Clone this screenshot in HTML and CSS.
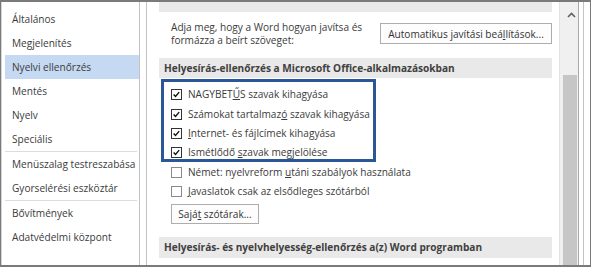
FILE: index.html
```html
<!DOCTYPE html>
<html lang="hu">
<head>
    <meta charset="UTF-8">
    <title>Word beállításai - Nyelvi ellenőrzés</title>
    <link rel="stylesheet" href="styles.css">
</head>
<body>
    <div class="dialog">
        <nav class="nav">
            <div class="nav-item">Általános</div>
            <div class="nav-item">Megjelenítés</div>
            <div class="nav-item active">Nyelvi ellenőrzés</div>
            <div class="nav-item">Mentés</div>
            <div class="nav-item">Nyelv</div>
            <div class="nav-item">Speciális</div>
            <div class="nav-sep"></div>
            <div class="nav-item">Menüszalag testreszabása</div>
            <div class="nav-item">Gyorselérési eszköztár</div>
            <div class="nav-sep"></div>
            <div class="nav-item">Bővítmények</div>
            <div class="nav-item">Adatvédelmi központ</div>
        </nav>
        <div class="pane">
            <div class="content">
                <div class="section-title cut"></div>
                <div class="autocorrect">
                    <p>Adja meg, hogy a Word hogyan javítsa és<br>formázza a beírt szöveget:</p>
                    <button class="btn btn-wide">Automatikus javítási beá<u>l</u>lítások...</button>
                </div>
                <div class="section-title">Helyesírás-ellenőrzés a Microsoft Office-alkalmazásokban</div>
                <div class="options">
                    <div class="marked">
                        <div class="row">
                            <span class="box checked"><svg viewBox="0 0 11 11"><path d="M2 5.4 L4.3 7.8 L8.8 2.6"/></svg></span>
                            <span>NAGYBET<u>Ű</u>S szavak kihagyása</span>
                        </div>
                        <div class="row">
                            <span class="box checked"><svg viewBox="0 0 11 11"><path d="M2 5.4 L4.3 7.8 L8.8 2.6"/></svg></span>
                            <span>Számokat tartalmaz<u>ó</u> szavak kihagyása</span>
                        </div>
                        <div class="row">
                            <span class="box checked"><svg viewBox="0 0 11 11"><path d="M2 5.4 L4.3 7.8 L8.8 2.6"/></svg></span>
                            <span><u>I</u>nternet- és fájlcímek kihagyása</span>
                        </div>
                        <div class="row">
                            <span class="box checked"><svg viewBox="0 0 11 11"><path d="M2 5.4 L4.3 7.8 L8.8 2.6"/></svg></span>
                            <span>Ismétlődő <u>s</u>zavak megjelölése</span>
                        </div>
                    </div>
                    <div class="row">
                        <span class="box"></span>
                        <span>Német: nyelvreform <u>u</u>táni szabályok használata</span>
                    </div>
                    <div class="row">
                        <span class="box"></span>
                        <span><u>J</u>avaslatok csak az elsődleges szótárból</span>
                    </div>
                </div>
                <button class="btn btn-small">Sajá<u>t</u> szótárak...</button>
                <div class="section-title last">Helyesírás- és nyelvhelyesség-ellenőrzés a(z) Word programban</div>
            </div>
            <div class="scrollbar">
                <svg class="arrow" viewBox="0 0 9 6"><path d="M1 5 L4.5 1.5 L8 5"/></svg>
                <div class="thumb"></div>
            </div>
        </div>
    </div>
</body>
</html>
```

FILE: styles.css
```css
body {
    margin: 0;
    font-family: "Open Sans", "Noto Sans", sans-serif;
    font-size: 10.1px;
    line-height: 13px;
    color: #3b3b3b;
    background: #ffffff;
}

.dialog {
    width: 591px;
    height: 267px;
    box-sizing: border-box;
    border: 2px solid #7a7a7a;
    border-left-width: 1px;
    border-right-width: 1px;
    display: flex;
    background: #ffffff;
    overflow: hidden;
}

/* left category list */
.nav {
    width: 139px;
    box-sizing: border-box;
    border-left: 1px solid #d6d6d6;
    border-right: 1px solid #c3c3c3;
    padding: 5px 0 0 3px;
    flex-shrink: 0;
}

.nav-item {
    height: 24px;
    line-height: 24px;
    padding-left: 7px;
    white-space: nowrap;
}

.nav-item.active {
    background-color: #c6d9f2;
}

.nav-sep {
    height: 1px;
    margin-right: 2px;
    background-color: #dcdcdc;
}

/* right options pane */
.pane {
    width: 438px;
    margin-left: 6px;
    box-sizing: border-box;
    border-left: 1px solid #c3c3c3;
    border-right: 1px solid #c3c3c3;
    padding-right: 4px;
    display: flex;
    flex-shrink: 0;
}

.content {
    flex: 1;
}

.section-title {
    margin: 0 7px 0 12px;
    height: 20px;
    line-height: 20px;
    padding-left: 5px;
    background-color: #e9e9e9;
    font-weight: bold;
    color: #404040;
    white-space: nowrap;
}

.section-title.cut {
    height: 10px;
}

.section-title.last {
    margin-top: 13px;
    height: 21px;
    line-height: 21px;
}

.autocorrect {
    margin: 11px 7px 14px 24px;
    height: 21px;
    display: flex;
    justify-content: space-between;
    align-items: center;
}

.autocorrect p {
    margin: 0;
}

.btn {
    font-family: inherit;
    font-size: inherit;
    color: #333333;
    background-color: #fdfdfd;
    border: 1px solid #adadad;
    padding: 0;
    margin: 0;
    box-sizing: border-box;
}

.btn-wide {
    width: 172px;
    height: 21px;
}

.btn-small {
    display: block;
    width: 88px;
    height: 20px;
    margin: 3px 0 0 24px;
}

.options {
    margin: 7px 0 0 24px;
}

.marked {
    position: relative;
}

/* highlight frame drawn over the first four options */
.marked::after {
    content: "";
    position: absolute;
    left: -10px;
    top: -6px;
    width: 215px;
    height: 83px;
    box-sizing: border-box;
    border: 3px solid #2b5797;
}

.row {
    height: 19.4px;
    display: flex;
    align-items: center;
    white-space: nowrap;
}

.box {
    width: 11px;
    height: 11px;
    box-sizing: border-box;
    border: 1px solid #8a8a8a;
    background: #ffffff;
    margin-right: 6px;
    flex-shrink: 0;
}

.box.checked {
    border-color: #333333;
}

.box svg {
    display: block;
    width: 9px;
    height: 9px;
}

.box svg path {
    fill: none;
    stroke: #111111;
    stroke-width: 1.7;
}

/* scrollbar */
.scrollbar {
    width: 20px;
    box-sizing: border-box;
    border-left: 1px solid #e2e2e2;
    border-right: 1px solid #a9a9a9;
    background-color: #f0f0f0;
    padding-left: 3px;
    display: flex;
    flex-direction: column;
}

.arrow {
    width: 9px;
    height: 6px;
    margin: 10px 0 0 4px;
}

.arrow path {
    fill: none;
    stroke: #606060;
    stroke-width: 1.6;
}

.thumb {
    width: 14px;
    flex: 1;
    margin-top: 57px;
    background-color: #c6c6c6;
}
```
